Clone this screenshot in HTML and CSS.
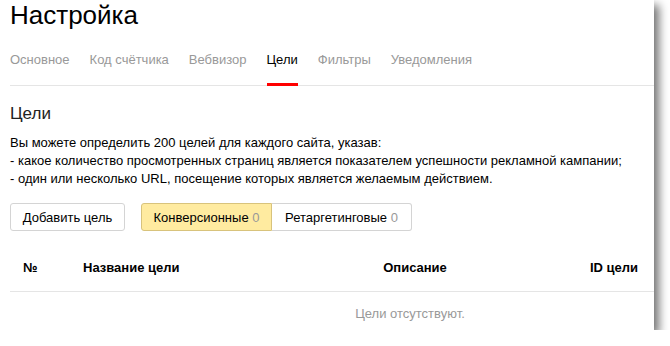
FILE: index.html
```html
<!DOCTYPE html>
<html lang="ru">
<head>
    <meta charset="UTF-8">
    <title>Настройка</title>
    <link rel="stylesheet" href="styles.css">
</head>
<body>

<div class="card">
    <h1 class="page-title">Настройка</h1>

    <div class="tabs">
        <span class="tab">Основное</span>
        <span class="tab">Код счётчика</span>
        <span class="tab">Вебвизор</span>
        <span class="tab tab-active">Цели</span>
        <span class="tab">Фильтры</span>
        <span class="tab">Уведомления</span>
    </div>

    <div class="section">
        <h2 class="section-title">Цели</h2>
        <p class="section-text">
            Вы можете определить 200 целей для каждого сайта, указав:<br>
            - какое количество просмотренных страниц является показателем успешности рекламной кампании;<br>
            - один или несколько URL, посещение которых является желаемым действием.
        </p>

        <div class="toolbar">
            <button class="btn">Добавить цель</button>
            <div class="switch">
                <button class="switch-item switch-item-on">Конверсионные <span class="count">0</span></button>
                <button class="switch-item">Ретаргетинговые <span class="count">0</span></button>
            </div>
        </div>
    </div>

    <div class="goals">
        <div class="goals-head">
            <div class="col col-num">№</div>
            <div class="col col-name">Название цели</div>
            <div class="col col-desc">Описание</div>
            <div class="col col-id">ID цели</div>
        </div>
        <div class="goals-empty">
            <div class="col col-num"></div>
            <div class="col col-name"></div>
            <div class="col col-desc">Цели отсутствуют.</div>
            <div class="col col-id"></div>
        </div>
    </div>
</div>

</body>
</html>
```

FILE: styles.css
```css
body {
    margin: 0;
    background-color: #fff;
    font-family: "Liberation Sans", Arial, sans-serif;
    font-size: 13px;
    color: #000;
}
.card {
    width: 654px;
    height: 330px;
    box-sizing: border-box;
    padding-left: 10px;
    background-color: #fff;
    box-shadow: 5px 5px 9px rgba(0, 0, 0, 0.55);
    overflow: hidden;
}
.page-title {
    margin: 0;
    font-size: 26px;
    line-height: 30px;
    font-weight: normal;
}
.tabs {
    display: flex;
    gap: 20px;
    margin-top: 22px;
    border-bottom: 1px solid #e5e5e5;
}
.tab {
    line-height: 16px;
    padding-bottom: 15px;
    margin-bottom: -1px;
    border-bottom: 3px solid transparent;
    color: #999;
}
.tab-active {
    color: #000;
    border-bottom-color: #f00;
}
.section-title {
    margin: 18px 0 0;
    font-size: 17px;
    line-height: 20px;
    font-weight: normal;
    color: #222;
}
.section-text {
    margin: 10px 0 0;
    line-height: 18px;
}
.toolbar {
    display: flex;
    gap: 16px;
    margin-top: 15px;
}
.btn,
.switch-item {
    height: 28px;
    padding: 0;
    border: 1px solid #d4d4d4;
    border-radius: 3px;
    background-color: #fff;
    font-family: inherit;
    font-size: 13px;
    color: #000;
    white-space: nowrap;
}
.btn {
    width: 115px;
}
.switch {
    display: flex;
}
.switch-item {
    width: 131px;
    border-radius: 0;
}
.switch-item:first-child {
    border-radius: 3px 0 0 3px;
}
.switch-item:last-child {
    width: 140px;
    border-left: none;
    border-radius: 0 3px 3px 0;
}
.switch-item-on {
    background-color: #ffeba0;
    border-color: #d8c37c;
}
.count {
    color: #999;
}
.goals {
    margin-top: 9px;
}
.goals-head,
.goals-empty {
    display: grid;
    grid-template-columns: 73px 247px 170px 154px;
}
.goals-head {
    height: 51px;
    align-items: center;
    border-bottom: 1px solid #e5e5e5;
    font-weight: bold;
}
.goals-head .col {
    padding-top: 4px;
}
.col-num {
    padding-left: 13px;
}
.col-desc {
    text-align: center;
}
.col-id {
    text-align: right;
    padding-right: 16px;
}
.goals-empty {
    padding-top: 14px;
    color: #999;
}
.goals-empty .col-desc {
    padding-right: 10px;
}
```
